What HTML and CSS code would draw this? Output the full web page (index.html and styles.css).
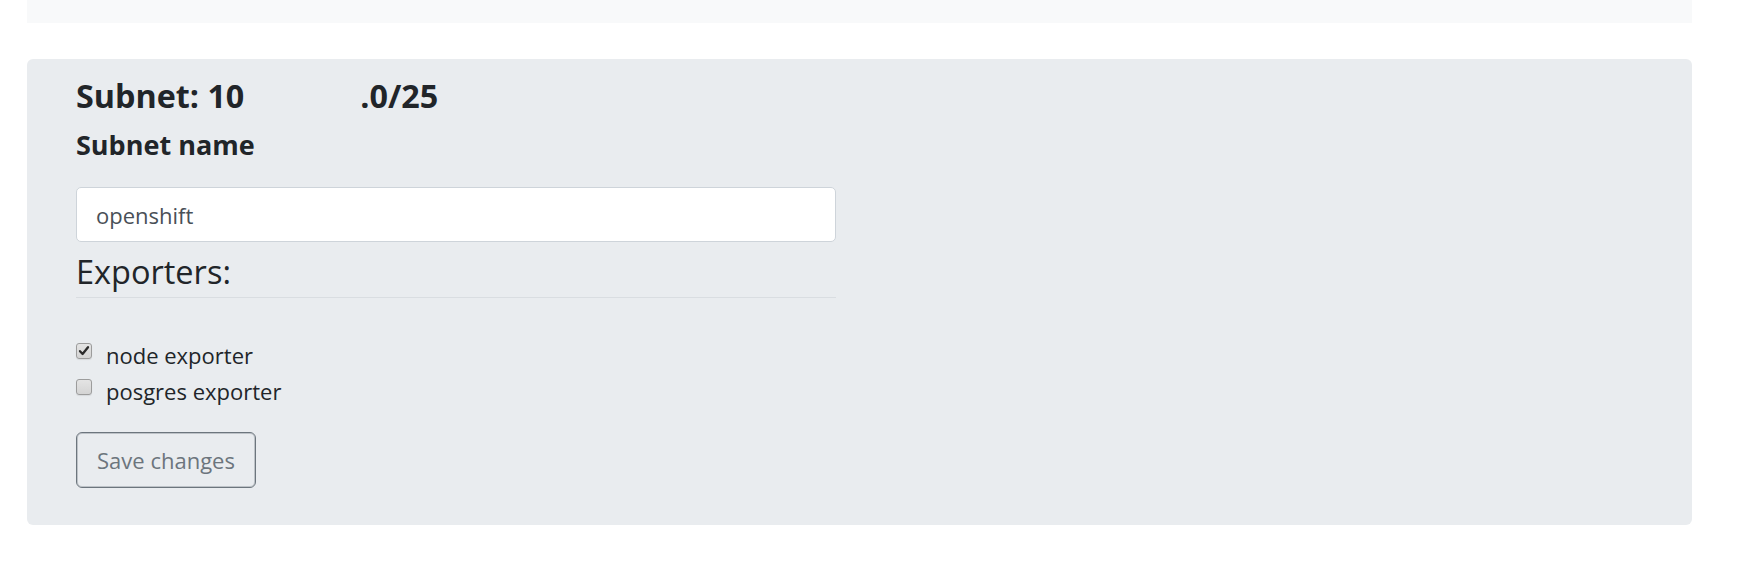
FILE: index.html
```html
<!DOCTYPE html>
<html lang="en">
<head>
<meta charset="utf-8">
<title>Subnet</title>
<link rel="stylesheet" href="styles.css">
</head>
<body>
<div class="page">
  <div class="topbar"></div>
  <main class="jumbotron">
    <h3 class="subnet-title"><span>Subnet: 10</span><span class="redacted"></span><span>.0/25</span></h3>
    <form class="subnet-form">
      <label class="field-label" for="subnet-name">Subnet name</label>
      <input id="subnet-name" class="form-control" type="text" value="openshift">
      <h3 class="section-title">Exporters:</h3>
      <div class="rule"></div>
      <div class="check-list">
        <label class="check">
          <span class="box checked"><svg viewBox="0 0 16 16" width="16" height="16"><path d="M4 8.2 L6.6 11 L12 4.2" fill="none" stroke="#2b2b2b" stroke-width="2.3" stroke-linecap="round" stroke-linejoin="round"/></svg></span>
          <span class="check-text">node exporter</span>
        </label>
        <label class="check">
          <span class="box"></span>
          <span class="check-text">posgres exporter</span>
        </label>
      </div>
      <button type="button" class="btn-outline">Save changes</button>
    </form>
  </main>
</div>
</body>
</html>
```
FILE: styles.css
```css
* { box-sizing: border-box; }
html, body { margin: 0; padding: 0; background: #fff; }
body {
  font-family: "Open Sans", "Noto Sans", sans-serif;
  color: #212529;
  font-size: 22px;
}
.page {
  margin-left: 27px;
  width: 1665px;
}
.topbar {
  height: 23px;
  background: #f8f9fa;
}
.jumbotron {
  margin-top: 36px;
  background: #e9ecef;
  border-radius: 6px;
  padding: 16px 49px 35px;
  height: 466px;
}
.subnet-title {
  margin: 0;
  font-size: 32.3px;
  line-height: 40px;
  font-weight: 700;
  white-space: nowrap;
}
.redacted {
  display: inline-block;
  width: 116px;
}
.subnet-form {
  width: 760px;
  display: flex;
  flex-direction: column;
}
.field-label {
  display: block;
  margin-top: 15px;
  font-size: 27px;
  line-height: 30px;
  font-weight: 700;
}
.form-control {
  margin-top: 27px;
  height: 55px;
  width: 760px;
  border: 1px solid #ced4da;
  border-radius: 5px;
  background: #fff;
  padding: 0 19px;
  font-family: inherit;
  font-size: 22px;
  color: #495057;
  outline: none;
}
.section-title {
  margin: 10px 0 0;
  font-size: 32.5px;
  line-height: 40px;
  font-weight: 400;
}
.rule {
  margin-top: 5px;
  height: 1px;
  background: #d9dde1;
}
.check-list {
  margin-top: 40px;
  display: flex;
  flex-direction: column;
}
.check {
  display: flex;
  align-items: flex-start;
  height: 35.5px;
  line-height: 34px;
  font-size: 22px;
}
.box {
  width: 16px;
  height: 16px;
  margin-top: 5px;
  margin-right: 14px;
  border: 1px solid #9c9c9c;
  border-radius: 3px;
  background: linear-gradient(#e4e4e4, #d4d4d4);
  display: flex;
  box-shadow: 0 1px 1px rgba(0,0,0,0.08);
}
.box.checked svg { display: block; margin: -1px; }
.btn-outline {
  align-self: flex-start;
  margin-top: 23px;
  width: 180px;
  height: 56px;
  border: 1px solid #6c757d;
  box-shadow: inset 0 0 0 1px rgba(108,117,125,0.35);
  border-radius: 6px;
  background: transparent;
  color: #6c757d;
  font-family: inherit;
  font-size: 22px;
  padding: 0;
}
```
